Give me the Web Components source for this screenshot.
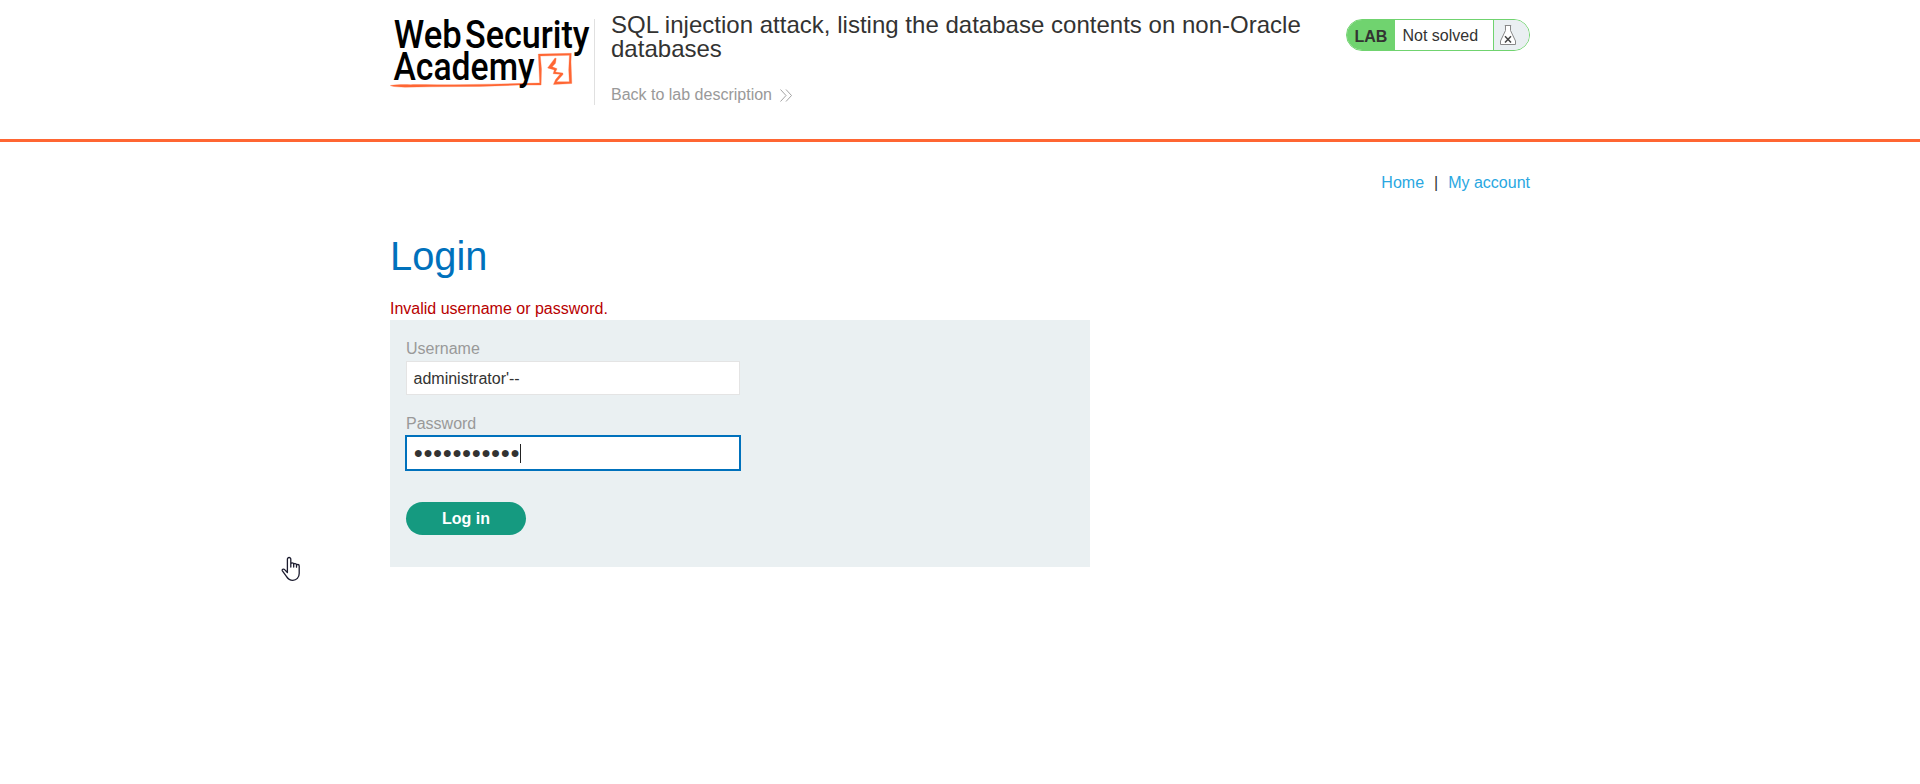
<!DOCTYPE html>
<html lang="en"><head><meta charset="utf-8"><title>Login</title>
<style>body{margin:0;background:#fff;color:#333332;font:16px/18px "Liberation Sans",Arial,sans-serif}</style></head>
<body>
<academy-page></academy-page>
<script>
const define=(name,html)=>{
  const t=document.createElement('template');t.innerHTML=html;
  customElements.define(name,class extends HTMLElement{
    constructor(){super();this.attachShadow({mode:'open'}).append(t.content.cloneNode(true));}
  });
};
define('academy-logo',`<style>:host{display:block;width:204px;height:86px;border-right:1px solid #e0e0e0}svg{display:block;overflow:visible}text{font-family:Roboto,sans-serif;font-weight:500;font-size:38px;fill:#000}</style>
<svg width="204" height="86" viewBox="390 19 204 86">
<text x="393.8" y="47.6" textLength="68" lengthAdjust="spacingAndGlyphs">Web</text>
<text x="465" y="47.6" textLength="124.5" lengthAdjust="spacingAndGlyphs">Security</text>
<g fill="#ff6633"><path d="M390.5 85.4C398 84.2 407 84.8 415 84.6C454 85.2 497 84 539.7 83L538.3 54.1L571.3 53.3L571 62L571.8 83.5L553.4 84.4L555.6 79.6L560 74.3L553.1 73.7L554.3 69.9L547.6 67.9L555 58L556.2 58.4L555.5 63.2L552.3 66.8L557.1 68.7L555.4 72.1L562.9 73.1L563 74.6L556.5 81.7L569.3 81.8L568.7 70L569.4 55.3L540.3 56L541.5 69L541.1 85L519 85.1L480 86.4L430 86.8L405 87.2C400 86.9 395 87 390.5 85.8Z" stroke="#ff6633" stroke-width=".3"/></g>
<text x="393.5" y="80.2" textLength="141" lengthAdjust="spacingAndGlyphs">Academy</text>
</svg>`);
define('lab-title',`<style>:host{display:block;width:705px;padding-left:16px}h2{margin:-6px 0 0;font-size:24px;line-height:24px;font-weight:400;letter-spacing:.015px}a{display:flex;align-items:center;gap:8px;margin-top:25px;color:#999;line-height:18px}svg{display:block}</style>
<h2><slot></slot></h2><a><span>Back to lab description</span><svg width="12" height="13" viewBox="0 0 12 13" fill="none" stroke="#999" stroke-width=".9"><path d="M.5.5 6 6.5.5 12.5M6 .5l5.5 6L6 12.5"/></svg></a>`);
define('lab-status',`<style>:host{display:flex;box-sizing:border-box;width:184px;height:32px;margin-left:auto;border:1px solid #70d36f;border-radius:16px;overflow:hidden;line-height:32px;background:#fff}
b{width:40.5px;padding-left:7.5px;background:#70d36f;line-height:34px}span{width:90.5px;padding-left:7.5px}i{flex:1;background:#eaeff2;border-left:1px solid #70d36f}svg{display:block;margin:5px 0 0 6px}</style>
<b>LAB</b><span>Not solved</span><i><svg width="16" height="20" viewBox="0 0 16 20" fill="#fff" stroke="#888" stroke-width="1"><path d="M5.5.5v5L.5 16v3.5h15V16l-5-10.5v-5"/><path d="M4.8.5h6.4"/><path d="m5 11.2 6 6.2m0-6.2-6 6.2" stroke="#444" stroke-width="1.5"/></svg></i>`);
define('academy-header',`<style>:host{display:block;height:139px;border-bottom:3px solid #ff6633}div{display:flex;align-items:flex-start;width:1140px;margin:auto;padding-top:19px}</style>
<div><academy-logo></academy-logo><lab-title>SQL injection attack, listing the database contents on non-Oracle databases</lab-title><lab-status></lab-status></div>`);
define('account-nav',`<style>:host{display:flex;justify-content:flex-end;gap:10px;padding-top:32px;color:#333332}a{color:#29a7e1}</style><a>Home</a><span>|</span><a>My account</a>`);
define('form-field',`<style>:host{display:block;height:75px}label{display:block;color:#999;line-height:18px;margin-bottom:3px;padding-top:1px}
div{display:flex;align-items:center;box-sizing:border-box;width:334px;height:34px;padding:1px 0 0 6.5px;border:1px solid #e4e4e4;background:#fff}
:host([active]) div{padding-top:0;border-color:#0071bc;box-shadow:0 0 0 1px #0071bc}
:host([active]) div::after{content:"";width:1px;height:19px;margin-left:.2px;background:#222}</style>
<label><slot name="label"></slot></label><div><slot></slot></div>`);
define('pill-button',`<style>:host{display:block;width:120px;height:33px;border-radius:17px;background:#159a80;color:#fff;font-weight:700;text-align:center;line-height:33px}</style><slot></slot>`);
define('login-form',`<style>:host{display:block;box-sizing:border-box;width:700px;height:247px;padding:19px 16px;background:#eaf0f2}pill-button{margin-top:13px}</style>
<form-field><span slot="label">Username</span><span>administrator'--</span></form-field>
<form-field active><span slot="label">Password</span><span>●●●●●●●●●●●</span></form-field>
<pill-button>Log in</pill-button>`);
define('hand-pointer',`<style>:host{display:block;position:absolute;left:281px;top:556px}svg{display:block}</style>
<svg width="20" height="26" viewBox="0 0 20 26" fill="#fff" stroke="#1b1b2e" stroke-width="1.3" stroke-linejoin="round" stroke-linecap="round"><path d="M6.4 16.5V3.3C6.4.9 9.8.9 9.8 3.3V11 8.2C9.8 6.5 12.7 6.6 12.7 8.2V11 8.8C12.7 7 15.5 7.2 15.5 8.8V11.2 9.7C15.5 8 18.2 8.1 18.2 10V17.5C18.2 21.5 15.5 24.3 11.8 24.3 8.5 24.3 6.8 22.6 5.4 20.3L1.4 14.8C.5 13.4 2.4 12.5 3.6 13.6Z"/></svg>`);
define('academy-page',`<style>:host{display:block}main{width:1140px;margin:auto}h1{margin:41px 0 21px;color:#0071bc;font-size:39.8px;line-height:46px;font-weight:400}p{margin:0;line-height:18px;padding-bottom:2px;color:#b80000}</style>
<academy-header></academy-header><main><account-nav></account-nav><h1>Login</h1><p>Invalid username or password.</p><login-form></login-form></main><hand-pointer></hand-pointer>`);
</script></body></html>
